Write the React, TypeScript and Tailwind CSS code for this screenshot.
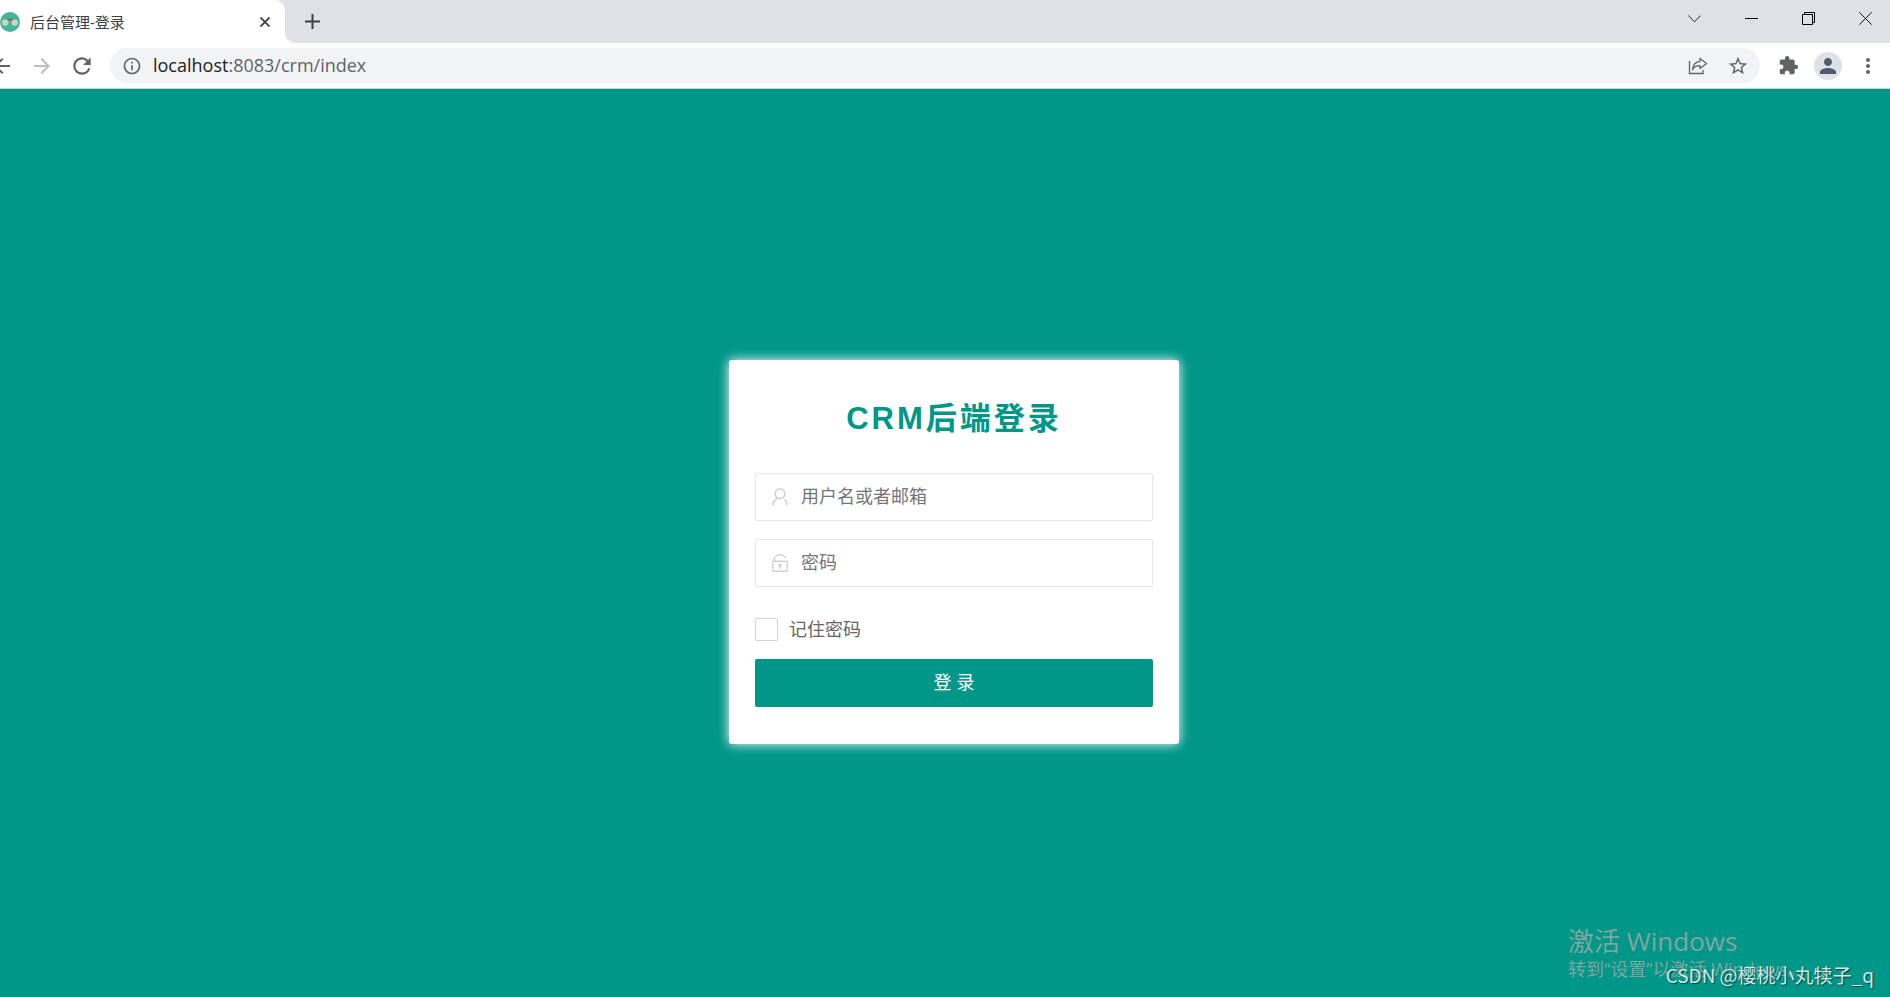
import { useState } from "react";
import {
  MdArrowBack,
  MdArrowForward,
  MdExtension,
  MdInfoOutline,
  MdMoreVert,
  MdPerson,
  MdRefresh,
  MdStarBorder,
} from "react-icons/md";

function Favicon() {
  return (
    <svg className="h-5 w-5 shrink-0" viewBox="0 0 20 20">
      <circle cx="10" cy="10" r="10" fill="#45b29d" />
      <path d="M4 7h12l2 3H2z" fill="#4f4f45" />
      <path d="M8.5 7.5h3v2.5h-3z" fill="#d9713f" />
      <circle cx="5.2" cy="10.6" r="3.3" fill="#9fe8dc" stroke="#c9ac83" strokeWidth="0.8" />
      <circle cx="14.8" cy="10.6" r="3.3" fill="#9fe8dc" stroke="#c9ac83" strokeWidth="0.8" />
    </svg>
  );
}

function TabStrip() {
  return (
    <div className="flex h-[43px] bg-white">
      <div className="w-[285px] shrink-0 bg-[#dee1e6]">
        <div className="flex h-full items-center rounded-tr-[10px] bg-white pr-3">
          <Favicon />
          <span className="ml-2.5 flex-1 text-[15px] leading-5 text-[#3c4043]">
            后台管理-登录
          </span>
          <button type="button" aria-label="关闭标签页" className="p-[3px]">
            <svg className="h-2.5 w-2.5" viewBox="0 0 10 10" stroke="#3c4043" strokeWidth="1.8">
              <path d="M.5.5l9 9M9.5.5l-9 9" />
            </svg>
          </button>
        </div>
      </div>
      <div className="flex flex-1 justify-between overflow-hidden rounded-bl-[10px] bg-[#dee1e6]">
        <button type="button" aria-label="新标签页" className="ml-5 self-center">
          <svg className="h-[15px] w-[15px]" viewBox="0 0 15 15" stroke="#3c4043" strokeWidth="2">
            <path d="M7.5 0v15M0 7.5h15" />
          </svg>
        </button>
        <div className="-mr-1 flex h-[37px]">
          <button type="button" aria-label="搜索标签页" className="flex w-[57px] items-center justify-center">
            <svg className="h-[13px] w-[13px]" viewBox="0 0 13 13" fill="none" stroke="#222">
              <path d="M.3 3.5l6.2 6.2 6.2-6.2" />
            </svg>
          </button>
          <button type="button" aria-label="最小化" className="flex w-[57px] items-center justify-center">
            <svg className="h-[13px] w-[13px]" viewBox="0 0 13 13" stroke="#000">
              <path d="M0 6.5h13" />
            </svg>
          </button>
          <button type="button" aria-label="还原" className="flex w-[57px] items-center justify-center">
            <svg className="h-[13px] w-[13px]" viewBox="0 0 13 13" fill="none" stroke="#000">
              <path d="M.5 2.5h10v10H.5zM2.5 2.5v-2h10v10h-2" />
            </svg>
          </button>
          <button type="button" aria-label="关闭" className="flex w-[57px] items-center justify-center">
            <svg className="h-[13px] w-[13px]" viewBox="0 0 13 13" stroke="#111">
              <path d="M.3.3l12.4 12.4M12.7.3L.3 12.7" />
            </svg>
          </button>
        </div>
      </div>
    </div>
  );
}

function Toolbar() {
  return (
    <div className="flex h-[46px] items-center border-b border-[#d5d8db] bg-white pr-0.5 text-[#5f6368]">
      <button type="button" aria-label="后退" className="-ml-[18px] flex w-10 shrink-0 justify-center">
        <MdArrowBack size={24} />
      </button>
      <button type="button" aria-label="前进" className="flex w-10 shrink-0 justify-center text-[#babcbe]">
        <MdArrowForward size={24} />
      </button>
      <button type="button" aria-label="刷新" className="flex w-10 shrink-0 justify-center">
        <MdRefresh size={26} />
      </button>
      <div className="mx-2 flex h-[35px] flex-1 items-center rounded-full bg-[#f1f3f4] pr-0.5">
        <MdInfoOutline size={20} className="ml-3 shrink-0" />
        <div className="ml-[11px] flex-1 pb-0.5 text-lg leading-6">
          <span className="text-[#202124]">localhost</span>:8083/crm/index
        </div>
        <button type="button" aria-label="分享" className="flex w-10 justify-center">
          <svg className="h-5 w-5" viewBox="0 0 20 20" fill="none" stroke="#5f6368" strokeWidth="1.3">
            <path d="M1.5 5v12.500h13.500V14" />
            <path d="M12 2.500l6.500 5-6.500 5V9.700c-3.500 0-6 1-7.500 4C5 9 7.500 5.700 12 5.300z" strokeLinejoin="round" />
          </svg>
        </button>
        <button type="button" aria-label="收藏" className="flex w-10 justify-center">
          <MdStarBorder size={22} />
        </button>
      </div>
      <button type="button" aria-label="扩展程序" className="flex w-10 justify-center">
        <MdExtension size={21} />
      </button>
      <button type="button" aria-label="用户" className="flex w-10 justify-center">
        <span className="flex h-7 w-7 items-center justify-center rounded-full bg-[#dee1e6] text-[#4f5b70]">
          <MdPerson size={24} />
        </span>
      </button>
      <button type="button" aria-label="菜单" className="flex w-10 justify-center">
        <MdMoreVert size={24} />
      </button>
    </div>
  );
}

function UserIcon() {
  return (
    <svg className="h-[18px] w-4 shrink-0" viewBox="0 0 16 18" fill="none" stroke="#d2d2d2" strokeWidth="1.6">
      <circle cx="8" cy="5.7" r="4.8" />
      <path d="M.8 17.5c.1-3.1 1.6-5.5 4.300-7M15.200 17.500c-.1-2.400-1.100-4.400-2.900-5.800" />
    </svg>
  );
}

function LockIcon() {
  return (
    <svg className="h-[18px] w-4 shrink-0" viewBox="0 0 16 18" fill="none" stroke="#d2d2d2" strokeWidth="1.4">
      <rect x=".7" y="7.2" width="14.6" height="10" rx=".8" />
      <path d="M2.200 7V6C2.200 2.800 4.800.8 8 .8c2.500 0 4.500 1.200 5.400 3.200" />
      <circle cx="8" cy="11.2" r="1.6" fill="#d2d2d2" stroke="none" />
      <path d="M8 11.500v3.200" />
    </svg>
  );
}

function LoginForm() {
  const [username, setUsername] = useState("");
  const [password, setPassword] = useState("");
  const [remember, setRemember] = useState(false);

  return (
    <div className="w-[450px] rounded-[3px] bg-white px-[26px] py-[37px] shadow-[0_0_12px_#fff]">
      <h1 className="mb-8 text-center text-[31px] leading-[44px] font-bold tracking-[3px] text-[#009688]">
        CRM后端登录
      </h1>
      <form className="flex flex-col gap-[18px]" onSubmit={(e) => e.preventDefault()}>
        <label className="flex h-12 items-center gap-[13px] rounded-[2px] border border-[#e6e6e6] px-4">
          <UserIcon />
          <input
            type="text"
            aria-label="用户名或者邮箱"
            placeholder="用户名或者邮箱"
            value={username}
            onChange={(e) => setUsername(e.target.value)}
            className="min-w-0 flex-1 text-lg leading-6 outline-none placeholder:text-[#757575]"
          />
        </label>
        <label className="flex h-12 items-center gap-[13px] rounded-[2px] border border-[#e6e6e6] px-4">
          <LockIcon />
          <input
            type="password"
            aria-label="密码"
            placeholder="密码"
            value={password}
            onChange={(e) => setPassword(e.target.value)}
            className="min-w-0 flex-1 text-lg leading-6 outline-none placeholder:text-[#757575]"
          />
        </label>
        <label className="mt-[13px] flex h-[23px] items-center gap-[11px] self-start text-lg leading-6 text-[#666]">
          <input
            type="checkbox"
            checked={remember}
            onChange={(e) => setRemember(e.target.checked)}
            className="h-[23px] w-[23px] appearance-none rounded-[2px] border border-[#d2d2d2] checked:bg-[#009688]"
          />
          记住密码
        </label>
        <button type="submit" className="h-12 rounded-[2px] bg-[#009688] text-lg leading-6 text-white">
          登 录
        </button>
      </form>
    </div>
  );
}

export default function App() {
  return (
    <div className="relative flex min-h-screen flex-col overflow-hidden bg-[#009688] font-['Open_Sans','Noto_Sans_CJK_SC',sans-serif]">
      <TabStrip />
      <Toolbar />
      <main className="flex flex-1 items-center justify-center pt-[18px] pl-[18px] font-['Liberation_Sans','Noto_Sans_CJK_SC',sans-serif]">
        <LoginForm />
      </main>

      {/* System activation notice */}
      <div className="absolute right-16 bottom-4 w-[258px] whitespace-nowrap text-[#7fa6a1]">
        <p className="text-[26px] leading-8">激活 Windows</p>
        <p className="text-lg leading-6">转到“设置”以激活 Windows。</p>
      </div>
      <p className="absolute right-4 bottom-2.5 font-['Noto_Sans_CJK_SC',sans-serif] text-[19px] leading-6 whitespace-nowrap text-[#d5e8e6] [text-shadow:1px_1px_1px_#00443e]">
        CSDN @樱桃小丸犊子_q
      </p>
    </div>
  );
}
